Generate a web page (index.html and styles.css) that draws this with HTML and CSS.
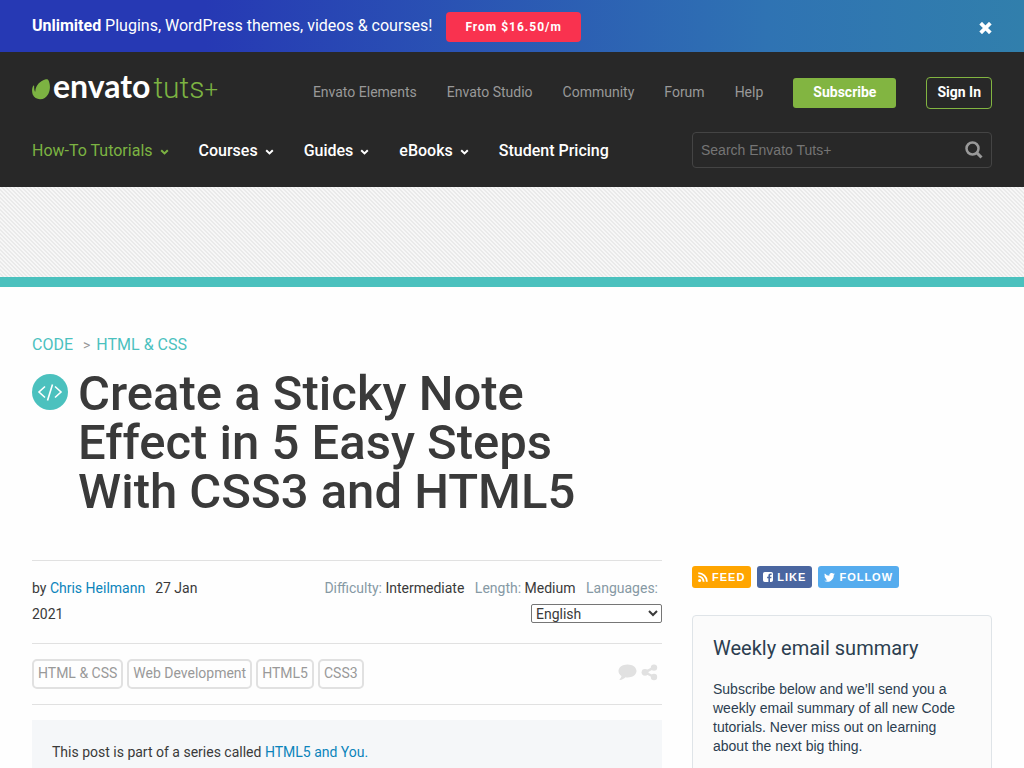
FILE: index.html
```html
<!DOCTYPE html>
<html lang="en">
<head>
<meta charset="utf-8">
<title>Create a Sticky Note Effect in 5 Easy Steps With CSS3 and HTML5</title>
<link rel="stylesheet" href="styles.css">
</head>
<body>
<aside class="promo">
  <p class="promo-text"><strong>Unlimited</strong> Plugins, WordPress themes, videos &amp; courses!</p>
  <a class="promo-button" href="#">From $16.50/m</a>
  <button class="promo-close" type="button" aria-label="Close">
    <svg width="13" height="12" viewBox="0 0 13 12"><path d="M3 2.500 10 9.500M10 2.500 3 9.500" stroke="#fff" stroke-width="3.800" stroke-linecap="square"/></svg>
  </button>
</aside>
<header class="site-header">
  <div class="header-row header-top">
    <a class="logo" href="#" aria-label="Envato Tuts+">
      <svg class="leaf" width="18" height="21" viewBox="0 0 18 21"><path fill="#7cb342" d="M13.800.3C15 0 16 .3 16.700 1.800 18.300 5.500 18.500 11 16.300 15 14.300 18.700 11.300 20.300 8 20.200 4.800 20.100 2 18.500.7 15.500-.3 12.500-.1 9 1.300 6.800c.4-.6 1-.3.9.3-.2 2 0 3.700.6 5.200.2.500.5.500.5-.1C3.800 6.500 8 1.700 13.800.3z"/></svg>
      <span class="logo-text"><span class="logo-envato">envato</span><span class="logo-tuts">tuts<span class="logo-plus">+</span></span></span>
    </a>
    <nav class="top-nav" aria-label="Envato sites">
      <a href="#">Envato Elements</a>
      <a href="#">Envato Studio</a>
      <a href="#">Community</a>
      <a href="#">Forum</a>
      <a href="#">Help</a>
      <a class="subscribe" href="#">Subscribe</a>
      <a class="sign-in" href="#">Sign In</a>
    </nav>
  </div>
  <div class="header-row header-main">
    <nav class="main-nav" aria-label="Main">
      <a class="current" href="#">How-To Tutorials <svg width="9" height="6" viewBox="0 0 9 6"><path d="M1.200 1.200 4.500 4.400 7.800 1.200"/></svg></a>
      <a href="#">Courses <svg width="9" height="6" viewBox="0 0 9 6"><path d="M1.200 1.200 4.500 4.400 7.800 1.200"/></svg></a>
      <a href="#">Guides <svg width="9" height="6" viewBox="0 0 9 6"><path d="M1.200 1.200 4.500 4.400 7.800 1.200"/></svg></a>
      <a href="#">eBooks <svg width="9" height="6" viewBox="0 0 9 6"><path d="M1.200 1.200 4.500 4.400 7.800 1.200"/></svg></a>
      <a href="#">Student Pricing</a>
    </nav>
    <form class="search">
      <input type="search" placeholder="Search Envato Tuts+" aria-label="Search Envato Tuts+">
      <button type="submit" aria-label="Search">
        <svg width="18" height="18" viewBox="0 0 18 18" fill="none" stroke="#999" stroke-width="2.500"><circle cx="7.500" cy="7.500" r="6"/><path d="M12 12 16.500 16.500" stroke-width="3"/></svg>
      </button>
    </form>
  </div>
</header>
<div class="ad-strip"></div>
<main class="page">
  <header class="title-block">
    <nav class="breadcrumbs" aria-label="Breadcrumb">
      <a href="#">CODE</a><span class="separator">&gt;</span><a href="#">HTML &amp; CSS</a>
    </nav>
    <div class="title-row">
      <svg class="topic-icon" width="36" height="36" viewBox="0 0 36 36"><circle cx="18" cy="18" r="18" fill="#4bc1be"/><path d="M13 12.500 7 18l6 5.500M23 12.500 29 18l-6 5.500M20.500 10.500 15.500 26.500" fill="none" stroke="#fff" stroke-width="1.600"/></svg>
      <h1>Create a Sticky Note Effect in 5 Easy Steps With CSS3 and HTML5</h1>
    </div>
  </header>
  <div class="columns">
    <article class="post">
      <div class="meta">
        <div class="byline">by <a href="#">Chris Heilmann</a><time datetime="2021-01-27">27 Jan 2021</time></div>
        <div class="details">
          <span class="detail">Difficulty: <b>Intermediate</b></span>
          <span class="detail">Length: <b>Medium</b></span>
          <label class="detail" for="language">Languages:</label>
          <select id="language"><option>English</option></select>
        </div>
      </div>
      <div class="tag-row">
        <div class="tags">
          <a href="#">HTML &amp; CSS</a>
          <a href="#">Web Development</a>
          <a href="#">HTML5</a>
          <a href="#">CSS3</a>
        </div>
        <div class="actions">
          <a href="#" aria-label="Comments"><svg width="19" height="17" viewBox="0 0 19 17"><path fill="#e1e1e1" d="M9.500.5c5 0 9 2.800 9 6.500s-4 6.500-9 6.500c-.7 0-1.400-.1-2-.2-1.500 1.400-3.300 2.500-5.500 2.700-.5 0-.6-.4-.3-.7 1-1 1.600-2 1.800-3.300C1.600 10.800.5 9 .5 7c0-3.700 4-6.500 9-6.500z"/></svg></a>
          <a href="#" aria-label="Share"><svg width="17" height="17" viewBox="0 0 17 17" fill="#e1e1e1"><path d="M13 3.500 4 8.300l9 4.700" fill="none" stroke="#e1e1e1" stroke-width="2.500"/><circle cx="13" cy="3.600" r="3.200"/><circle cx="4" cy="8.300" r="3.400"/><circle cx="13" cy="13" r="3.200"/></svg></a>
        </div>
      </div>
      <div class="series">This post is part of a series called <a href="#">HTML5 and You.</a></div>
    </article>
    <aside class="sidebar">
      <div class="social">
        <a class="feed" href="#"><svg width="10" height="10" viewBox="0 0 10 10" fill="none" stroke="#fff" stroke-width="1.900"><circle cx="1.600" cy="8.400" r="1.500" fill="#fff" stroke="none"/><path d="M.3 4.400a5.300 5.300 0 0 1 5.300 5.300M.3 1.100a8.600 8.600 0 0 1 8.600 8.600"/></svg>FEED</a>
        <a class="like" href="#"><svg width="10" height="10" viewBox="0 0 10 10"><path fill="#fff" d="M1.800 0h6.400Q10 0 10 1.800v6.400Q10 10 8.200 10H7V6.200h1.300l.2-1.500H7v-.9c0-.5.200-.8.800-.8h.8V1.600H7.400c-1.200 0-2 .7-2 2v1.100H4.100v1.500h1.300V10H1.800Q0 10 0 8.200V1.800Q0 0 1.800 0z"/></svg>LIKE</a>
        <a class="follow" href="#"><svg width="11" height="9" viewBox="0 0 24 20"><path fill="#fff" d="M24 2.400a10 10 0 0 1-2.800.8A5 5 0 0 0 23.300.4a10 10 0 0 1-3.100 1.200 4.900 4.900 0 0 0-8.400 4.500A14 14 0 0 1 1.700.9a4.900 4.900 0 0 0 1.500 6.600A5 5 0 0 1 1 6.900a4.900 4.900 0 0 0 3.900 4.900 5 5 0 0 1-2.200.1 4.900 4.900 0 0 0 4.600 3.400A9.900 9.900 0 0 1 0 17.300 14 14 0 0 0 21.500 4.900 10 10 0 0 0 24 2.400z"/></svg>FOLLOW</a>
      </div>
      <section class="newsletter">
        <h2>Weekly email summary</h2>
        <p>Subscribe below and we’ll send you a weekly email summary of all new Code tutorials. Never miss out on learning about the next big thing.</p>
      </section>
    </aside>
  </div>
</main>
</body>
</html>
```
FILE: styles.css
```css
* { box-sizing: border-box; }
body {
  margin: 0;
  background: #fefefe;
  color: #3a3a3a;
  font: 14px/26px Roboto, "Liberation Sans", sans-serif;
}
a { color: #0b84bb; text-decoration: none; }
svg { display: block; }
button { border: 0; padding: 0; background: none; cursor: pointer; }
h1, h2, p { margin: 0; }

.promo {
  display: flex;
  align-items: center;
  height: 52px;
  padding: 0 32px;
  background: linear-gradient(90deg, #2639b4 0%, #2639b4 20%, #2f73b3 75%, #317fac 100%);
  color: #fff;
}
.promo-text { font-size: 16px; }
.promo-text strong { font-weight: 700; }
.promo-button {
  margin: 2px 0 0 14px;
  padding: 0 19px;
  border-radius: 4px;
  background: #f9324f;
  color: #fff;
  font-size: 12px;
  font-weight: 700;
  line-height: 30px;
  letter-spacing: 1px;
}
.promo-close { margin: 4px 0 0 auto; }

.site-header {
  padding: 22px 32px 19px;
  background: #282828;
}
.header-row { display: flex; align-items: center; justify-content: space-between; }
.header-top { height: 36px; }
.header-main { margin-top: 22px; }
.logo {
  display: flex;
  align-items: center;
  padding-bottom: 9px;
  color: #7cb342;
  line-height: 30px;
}
.leaf { margin: 4px 3px 0 0; }
.logo-text { display: flex; align-items: baseline; }
.logo-envato { color: #fff; font-family: Lato, sans-serif; font-size: 32px; font-weight: 700; }
.logo-tuts { margin-left: 3px; font-size: 30px; font-weight: 300; }
.logo-plus { font-size: 24px; }
.top-nav { display: flex; align-items: center; gap: 30px; margin-top: 2px; }
.top-nav a { padding-bottom: 2px; color: #999; }
.top-nav .subscribe {
  padding: 0 20px 2px;
  border-radius: 3px;
  background: #82b541;
  color: #fff;
  font-weight: 700;
  line-height: 28px;
}
.top-nav .sign-in {
  padding: 0 10px 2px;
  border: 1px solid #82b541;
  border-radius: 4px;
  color: #fff;
  font-weight: 700;
  line-height: 28px;
}
.main-nav { display: flex; gap: 30px; padding-top: 2px; font-size: 16px; }
.main-nav a { display: flex; align-items: center; gap: 7px; color: #fff; font-weight: 500; }
.main-nav .current { color: #7cb342; font-weight: 400; }
.main-nav svg { margin-top: 2px; fill: none; stroke: currentColor; stroke-width: 2; }
.search {
  display: flex;
  align-items: center;
  width: 300px;
  height: 36px;
  padding: 0 8px;
  border: 1px solid #444;
  border-radius: 4px;
}
.search input {
  flex: 1;
  min-width: 0;
  padding: 0;
  border: 0;
  outline: 0;
  background: none;
  color: #fff;
  font: 14px "Liberation Sans", Arial, sans-serif;
}
.search input::placeholder { color: #757575; }

.ad-strip {
  height: 100px;
  border-bottom: 10px solid #4bc1be;
  background: linear-gradient(45deg, #eaeaea 25%, #f7f7f7 25% 50%, #eaeaea 50% 75%, #f7f7f7 75%) 0 0 / 4px 4px;
}

.page { padding: 45px 32px 0; }
.breadcrumbs { display: flex; font-size: 16px; }
.breadcrumbs a { color: #4bc1be; }
.separator { margin: 0 6px 0 10px; color: #999; font-size: 14px; }
.title-row { display: flex; gap: 10px; max-width: 580px; margin-top: 11px; }
.topic-icon { flex: none; margin-top: 5px; }
h1 { font-size: 49px; font-weight: 500; line-height: 49px; }

.columns {
  display: grid;
  grid-template-columns: minmax(0, 1fr) 300px;
  gap: 30px;
  margin-top: 44px;
}
.meta {
  display: flex;
  justify-content: space-between;
  padding: 14px 0 16px;
  border-top: 1px solid #e1e1e1;
  border-bottom: 1px solid #e1e1e1;
}
.byline { width: 200px; }
.byline time { margin-left: 10px; }
.details { width: 350px; color: #8699a4; text-align: right; }
.detail { margin-left: 7px; }
label.detail { margin-right: 4px; }
.detail b { color: #3a3a3a; font-weight: 400; }
.details select {
  width: 131px;
  height: 19px;
  border: 1px solid #767676;
  border-radius: 2px;
  background: #fff;
  color: #3a3a3a;
  font: 14px Roboto, sans-serif;
}
.tag-row {
  display: flex;
  align-items: center;
  justify-content: space-between;
  padding: 15px 0;
  border-bottom: 1px solid #e1e1e1;
}
.tags { display: flex; gap: 4px; }
.tags a {
  padding: 0 4px 2px;
  border: 2px solid #e1e1e1;
  border-radius: 5px;
  color: #999;
  line-height: 24px;
}
.actions { display: flex; gap: 4px; margin-right: 4px; padding-bottom: 4px; }
.series {
  min-height: 120px;
  margin-top: 15px;
  padding: 19px 20px;
  background: #f5f7f9;
}

.social { display: flex; gap: 6px; padding-top: 6px; }
.social a {
  display: flex;
  align-items: center;
  gap: 4px;
  padding: 0 6px;
  border-radius: 3px;
  color: #fff;
  font: bold 11px/22px "Liberation Sans", Arial, sans-serif;
  letter-spacing: 1px;
}
.social .feed { background: #ffa500; }
.social .like { background: #4a66a0; }
.social .follow { background: #55acee; }
.newsletter {
  min-height: 240px;
  margin-top: 27px;
  padding: 20px;
  border: 1px solid #dfe4e8;
  border-radius: 4px;
  background: #fbfbfb;
  color: #2c3e50;
}
.newsletter h2 { font-size: 20px; font-weight: 400; line-height: 24px; }
.newsletter p { margin-top: 20px; font: 14px/19px "Liberation Sans", Arial, sans-serif; }
```
